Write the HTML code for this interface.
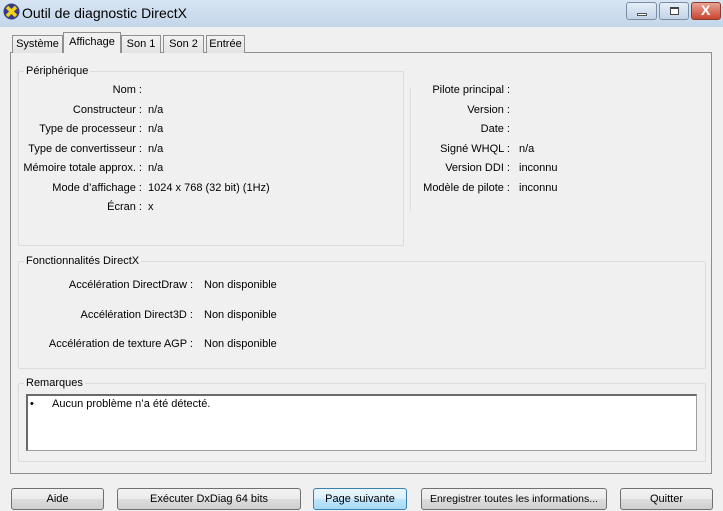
<!DOCTYPE html>
<html><head><meta charset="utf-8"><style>
*{margin:0;padding:0;box-sizing:border-box}
body{width:723px;height:511px;overflow:hidden;background:#f0f0f0;font-family:"Liberation Sans",sans-serif;font-size:11px;color:#000;position:relative}
.a{position:absolute;white-space:nowrap}
.r{position:absolute;white-space:nowrap;text-align:right}
.title{position:absolute;left:0;top:0;width:723px;height:27px;background:linear-gradient(#d7e5f3,#c3d6ea);}
.grp{position:absolute;border:1px solid #dcdcdc;border-radius:2px}
.lg{position:absolute;background:#f0f0f0;padding:0 2px;font-size:11px}
.btn{position:absolute;top:488px;height:22px;border:1px solid #707070;border-radius:3px;background:linear-gradient(#f2f2f2 0%,#ebebeb 50%,#dddddd 51%,#cfcfcf 100%);text-align:center;line-height:20px;font-size:11px;white-space:nowrap;overflow:hidden}
.tab{position:absolute;top:35px;height:18px;border:1px solid #8e8f8f;border-bottom:none;background:linear-gradient(#f2f2f2,#e3e3e3);text-align:center;line-height:17px;font-size:11px;white-space:nowrap}
.wb{position:absolute;top:2px;height:18px;border:1px solid #7b8ea5;border-radius:3px;background:linear-gradient(#e5eef8,#c2d3e7)}
</style></head><body>
<div class="title"></div>
<svg class="a" style="left:3px;top:3px" width="17" height="17" viewBox="0 0 17 17"><circle cx="8.5" cy="8.5" r="8" fill="#3a3a8a"/><path d="M4 4L13 13M13 4L4 13" stroke="#f2d21a" stroke-width="3.5"/></svg>
<div class="a" style="left:22px;top:5px;font-size:14px">Outil de diagnostic DirectX</div>
<div class="wb" style="left:626px;width:31px"><div class="a" style="left:10px;top:10px;width:10px;height:3px;background:#fff;border:1px solid #555"></div></div>
<div class="wb" style="left:659px;width:30px"><div class="a" style="left:10px;top:4px;width:9px;height:8px;border:1px solid #444;border-top-width:2px;background:#fff"></div></div>
<div class="wb" style="left:691px;width:30px;border-color:#8a3a30;background:linear-gradient(#e8a394,#c9452f)"><div class="a" style="left:9px;top:-1px;color:#fff;font-weight:bold;font-size:14px">X</div></div>
<div class="a" style="left:10px;top:52px;width:702px;height:422px;border:1px solid #8e8f8f;background:#f0f0f0"></div>
<div class="tab" style="left:12px;width:51px">Système</div>
<div class="tab" style="left:63px;top:32px;height:21px;width:58px;background:#f0f0f0;line-height:19px">Affichage</div>
<div class="tab" style="left:121px;width:40px">Son 1</div>
<div class="tab" style="left:163px;width:41px">Son 2</div>
<div class="tab" style="left:206px;width:39px">Entrée</div>
<div class="grp" style="left:18px;top:71px;width:386px;height:175px"></div>
<div class="lg" style="left:24px;top:65px">Périphérique</div>
<div class="r" style="right:581px;top:84px">Nom :</div>
<div class="r" style="right:581px;top:104px">Constructeur :</div>
<div class="r" style="right:581px;top:123px">Type de processeur :</div>
<div class="r" style="right:581px;top:143px">Type de convertisseur :</div>
<div class="r" style="right:581px;top:162px">Mémoire totale approx. :</div>
<div class="r" style="right:581px;top:182px">Mode d’affichage :</div>
<div class="r" style="right:581px;top:201px">Écran :</div>
<div class="a" style="left:148px;top:104px">n/a</div>
<div class="a" style="left:148px;top:123px">n/a</div>
<div class="a" style="left:148px;top:143px">n/a</div>
<div class="a" style="left:148px;top:162px">n/a</div>
<div class="a" style="left:148px;top:182px">1024 x 768 (32 bit) (1Hz)</div>
<div class="a" style="left:148px;top:201px">x</div>
<div class="a" style="left:410px;top:88px;width:1px;height:123px;background:#dcdcdc"></div>
<div class="r" style="right:213px;top:84px">Pilote principal :</div>
<div class="r" style="right:213px;top:104px">Version :</div>
<div class="r" style="right:213px;top:123px">Date :</div>
<div class="r" style="right:213px;top:143px">Signé WHQL :</div>
<div class="r" style="right:213px;top:162px">Version DDI :</div>
<div class="r" style="right:213px;top:182px">Modèle de pilote :</div>
<div class="a" style="left:519px;top:143px">n/a</div>
<div class="a" style="left:519px;top:162px">inconnu</div>
<div class="a" style="left:519px;top:182px">inconnu</div>
<div class="grp" style="left:18px;top:261px;width:688px;height:108px"></div>
<div class="lg" style="left:24px;top:255px">Fonctionnalités DirectX</div>
<div class="r" style="right:530px;top:279px">Accélération DirectDraw :</div>
<div class="r" style="right:530px;top:309px">Accélération Direct3D :</div>
<div class="r" style="right:530px;top:338px">Accélération de texture AGP :</div>
<div class="a" style="left:204px;top:279px">Non disponible</div>
<div class="a" style="left:204px;top:309px">Non disponible</div>
<div class="a" style="left:204px;top:338px">Non disponible</div>
<div class="grp" style="left:18px;top:383px;width:688px;height:79px"></div>
<div class="lg" style="left:24px;top:377px">Remarques</div>
<div class="a" style="left:26px;top:394px;width:671px;height:57px;background:#fff;border:1px solid #a0a0a0;border-top:2px solid #6a6a6a;border-left:2px solid #6a6a6a"></div>
<div class="a" style="left:30px;top:398px">•</div>
<div class="a" style="left:52px;top:398px">Aucun problème n’a été détecté.</div>
<div class="btn" style="left:11px;width:93px">Aide</div>
<div class="btn" style="left:117px;width:184px">Exécuter DxDiag 64 bits</div>
<div class="btn" style="left:313px;width:94px;border-color:#3c7fb1;background:linear-gradient(#eaf6fd 0%,#d9f0fc 50%,#bee6fd 51%,#a7d9f5 100%)">Page suivante</div>
<div class="btn" style="left:421px;width:186px;font-size:10.5px">Enregistrer toutes les informations...</div>
<div class="btn" style="left:620px;width:93px">Quitter</div>
</body></html>
